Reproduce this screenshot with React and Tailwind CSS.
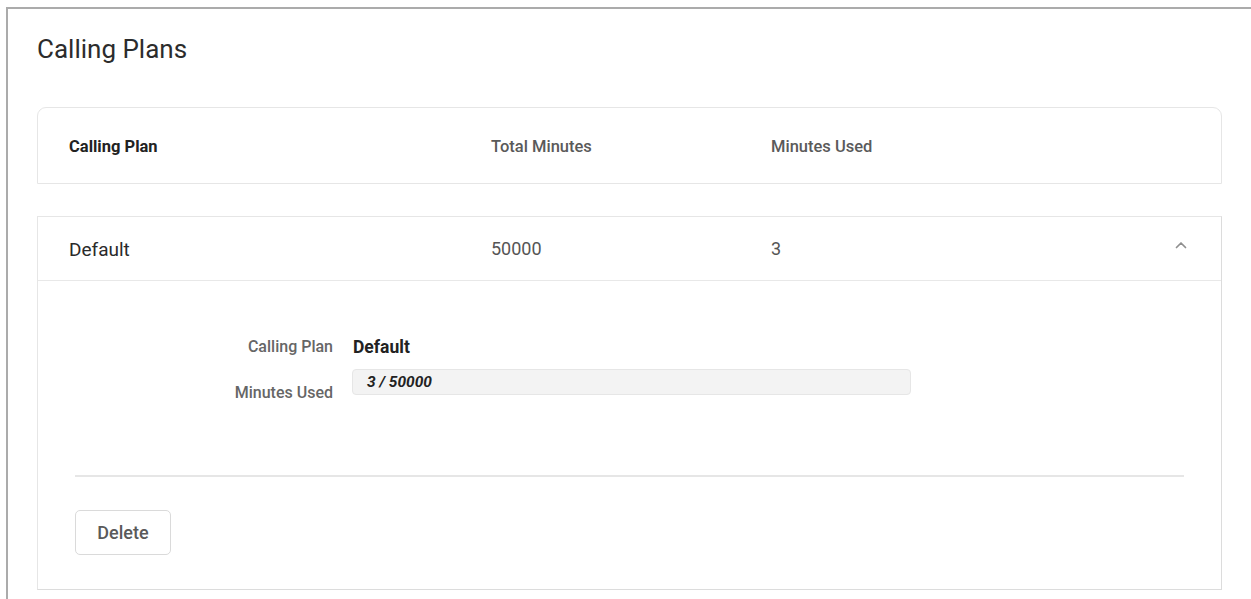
import React from "react";

const font = { fontFamily: "Roboto, 'Liberation Sans', sans-serif" };

function ChevronUp() {
  return (
    <svg width="14" height="10" viewBox="0 0 14 10" fill="none" className="mb-[8px]">
      <path d="M2.5 7.5 L7 3 L11.5 7.5" stroke="#8f8f8f" strokeWidth="1.7" strokeLinecap="round" strokeLinejoin="round" />
    </svg>
  );
}

export default function App() {
  return (
    <div className="min-h-screen bg-white" style={font}>
      <div className="ml-[6px] mt-[7px] border-l-2 border-t-2 border-[#ababab] min-h-[592px] pl-[29px] pr-[29px]">
        <h1 className="mt-[24px] text-[26px] leading-[32px] font-normal text-[#2c2c2c]">Calling Plans</h1>

        {/* column headings */}
        <div className="mt-[42px] h-[77px] rounded-t-[9px] border border-[#e6e6e6] flex items-center pl-[31px] pt-[4px]">
          <div className="w-[422px] text-[16.5px] font-bold text-[#222]">Calling Plan</div>
          <div className="w-[280px] text-[16.5px] font-medium text-[#5a5a5a]">Total Minutes</div>
          <div className="flex-1 text-[16.5px] font-medium text-[#5a5a5a]">Minutes Used</div>
        </div>

        {/* plan entry */}
        <div className="mt-[32px] border border-[#e6e6e6] border-b-[#dcdcdc] border-r-[#dcdcdc]">
          <div className="h-[64px] flex items-center pl-[31px] pr-[33px] border-b border-[#e8e8e8]">
            <div className="w-[422px] text-[19px] text-[#2a2a2a] pt-[3px]">Default</div>
            <div className="w-[280px] text-[18px] text-[#555]">50000</div>
            <div className="flex-1 text-[18px] text-[#555]">3</div>
            <ChevronUp />
          </div>

          <div className="pt-[53px]">
            <div className="flex items-center h-[26px]">
              <div className="w-[295px] text-right text-[16px] font-medium text-[#666]">Calling Plan</div>
              <div className="ml-[20px] text-[17.5px] font-bold text-[#222]">Default</div>
            </div>
            <div className="flex items-start mt-[9px]">
              <div className="w-[295px] text-right text-[16px] font-medium text-[#666] pt-[12px]">Minutes Used</div>
              <div className="ml-[19px] w-[559px] h-[26px] rounded-[4px] bg-[#f3f3f3] border border-[#e6e6e6] pl-[14px] pt-[2px] flex items-start">
                <span className="text-[15.5px] leading-[20px] font-bold italic text-[#222]">3 / 50000</span>
              </div>
            </div>
          </div>

          <div className="mx-[37px] mt-[70px] border-t-2 border-[#e6e6e6]" />

          <div className="px-[37px] pt-[33px] pb-[34px]">
            <button className="w-[96px] h-[45px] rounded-[5px] border border-[#dadada] bg-white text-[18px] font-medium text-[#5a5a5a]">
              Delete
            </button>
          </div>
        </div>
      </div>
    </div>
  );
}
